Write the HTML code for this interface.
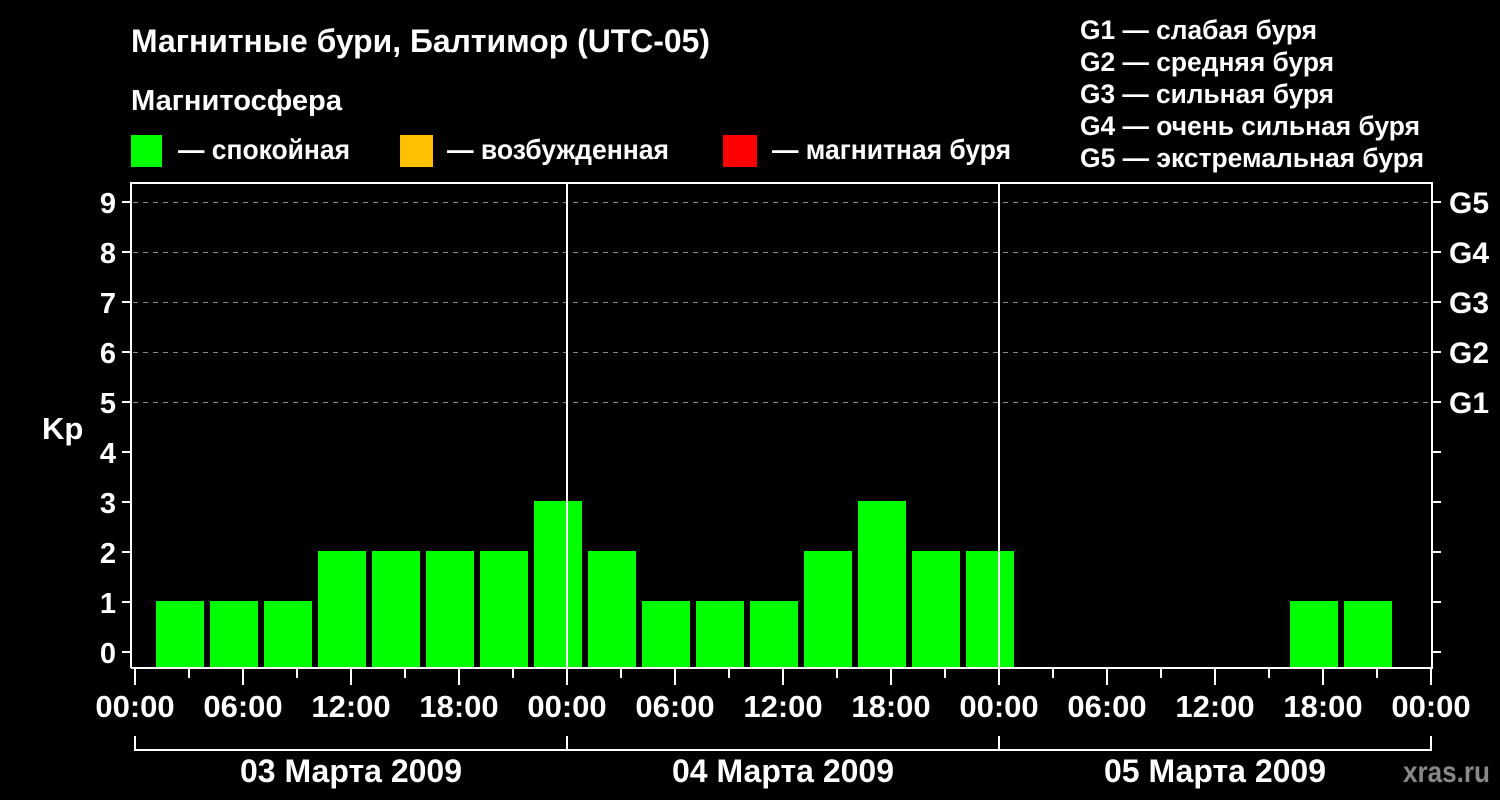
<!DOCTYPE html>
<html><head><meta charset="utf-8"><style>html,body{margin:0;padding:0;background:#000;}svg{display:block}</style></head>
<body>
<svg width="1500" height="800" xmlns="http://www.w3.org/2000/svg" font-family="Liberation Sans, Arial, sans-serif" font-weight="bold" fill="#fff">
<rect width="1500" height="800" fill="#000"/>
<text x="131" y="52" font-size="32" textLength="579" lengthAdjust="spacingAndGlyphs">Магнитные бури, Балтимор (UTC-05)</text>
<text x="131" y="110" font-size="29" textLength="211" lengthAdjust="spacingAndGlyphs">Магнитосфера</text>
<rect x="131" y="135" width="31" height="32" fill="#00ff00"/>
<rect x="400" y="135" width="33" height="32" fill="#ffc000"/>
<rect x="723" y="135" width="34" height="32" fill="#ff0000"/>
<text x="178" y="159" font-size="28" textLength="172" lengthAdjust="spacingAndGlyphs">— спокойная</text>
<text x="447" y="159" font-size="28" textLength="222" lengthAdjust="spacingAndGlyphs">— возбужденная</text>
<text x="772" y="159" font-size="28" textLength="239" lengthAdjust="spacingAndGlyphs">— магнитная буря</text>
<g font-size="27">
<text x="1080" y="39" textLength="237" lengthAdjust="spacingAndGlyphs">G1 — слабая буря</text>
<text x="1080" y="71" textLength="254" lengthAdjust="spacingAndGlyphs">G2 — средняя буря</text>
<text x="1080" y="103" textLength="254" lengthAdjust="spacingAndGlyphs">G3 — сильная буря</text>
<text x="1080" y="135" textLength="340" lengthAdjust="spacingAndGlyphs">G4 — очень сильная буря</text>
<text x="1080" y="167" textLength="344" lengthAdjust="spacingAndGlyphs">G5 — экстремальная буря</text>
</g>
<g stroke="#888" stroke-width="1" stroke-dasharray="5,5">
<line x1="133" y1="202.5" x2="1431" y2="202.5"/>
<line x1="133" y1="252.5" x2="1431" y2="252.5"/>
<line x1="133" y1="302.5" x2="1431" y2="302.5"/>
<line x1="133" y1="352.5" x2="1431" y2="352.5"/>
<line x1="133" y1="402.5" x2="1431" y2="402.5"/>
</g>
<g fill="#00ff00">
<rect x="156" y="601" width="48" height="67"/>
<rect x="210" y="601" width="48" height="67"/>
<rect x="264" y="601" width="48" height="67"/>
<rect x="318" y="551" width="48" height="117"/>
<rect x="372" y="551" width="48" height="117"/>
<rect x="426" y="551" width="48" height="117"/>
<rect x="480" y="551" width="48" height="117"/>
<rect x="534" y="501" width="48" height="167"/>
<rect x="588" y="551" width="48" height="117"/>
<rect x="642" y="601" width="48" height="67"/>
<rect x="696" y="601" width="48" height="67"/>
<rect x="750" y="601" width="48" height="67"/>
<rect x="804" y="551" width="48" height="117"/>
<rect x="858" y="501" width="48" height="167"/>
<rect x="912" y="551" width="48" height="117"/>
<rect x="966" y="551" width="48" height="117"/>
<rect x="1290" y="601" width="48" height="67"/>
<rect x="1344" y="601" width="48" height="67"/>
</g>
<g stroke="#fff" stroke-width="2" fill="none">
<path d="M131,668 V183 H1432 V668 H131"/>
<line x1="567" y1="182" x2="567" y2="668"/>
<line x1="999" y1="182" x2="999" y2="668"/>
<path d="M122,202H131M122,252H131M122,302H131M122,352H131M122,402H131M122,452H131M122,502H131M122,552H131M122,602H131M122,652H131"/>
<path d="M1432,202H1441M1432,252H1441M1432,302H1441M1432,352H1441M1432,402H1441M1432,452H1441M1432,502H1441M1432,552H1441M1432,602H1441M1432,652H1441"/>
<path d="M135,668V685M243,668V685M351,668V685M459,668V685M567,668V685M675,668V685M783,668V685M891,668V685M999,668V685M1107,668V685M1215,668V685M1323,668V685M1431,668V685"/>
<path d="M189,668V678M297,668V678M405,668V678M513,668V678M621,668V678M729,668V678M837,668V678M945,668V678M1053,668V678M1161,668V678M1269,668V678M1377,668V678"/>
<path d="M135,736V750H1431V736M567,736V750M999,736V750"/>
</g>
<g font-size="29" text-anchor="end">
<text x="116" y="213">9</text><text x="116" y="263">8</text><text x="116" y="313">7</text><text x="116" y="363">6</text><text x="116" y="413">5</text><text x="116" y="463">4</text><text x="116" y="513">3</text><text x="116" y="563">2</text><text x="116" y="613">1</text><text x="116" y="663">0</text>
</g>
<text x="42" y="439" font-size="31">Kp</text>
<g font-size="30">
<text x="1449" y="213">G5</text><text x="1449" y="263">G4</text><text x="1449" y="313">G3</text><text x="1449" y="363">G2</text><text x="1449" y="413">G1</text>
</g>
<g font-size="31" text-anchor="middle">
<text x="135" y="717">00:00</text><text x="243" y="717">06:00</text><text x="351" y="717">12:00</text><text x="459" y="717">18:00</text>
<text x="567" y="717">00:00</text><text x="675" y="717">06:00</text><text x="783" y="717">12:00</text><text x="891" y="717">18:00</text>
<text x="999" y="717">00:00</text><text x="1107" y="717">06:00</text><text x="1215" y="717">12:00</text><text x="1323" y="717">18:00</text>
<text x="1431" y="717">00:00</text>
</g>
<g font-size="32" text-anchor="middle">
<text x="351" y="782">03 Марта 2009</text>
<text x="783" y="782">04 Марта 2009</text>
<text x="1215" y="782">05 Марта 2009</text>
</g>
<text x="1403" y="782" font-size="30" fill="#888" textLength="87" lengthAdjust="spacingAndGlyphs">xras.ru</text>
</svg>
</body></html>
